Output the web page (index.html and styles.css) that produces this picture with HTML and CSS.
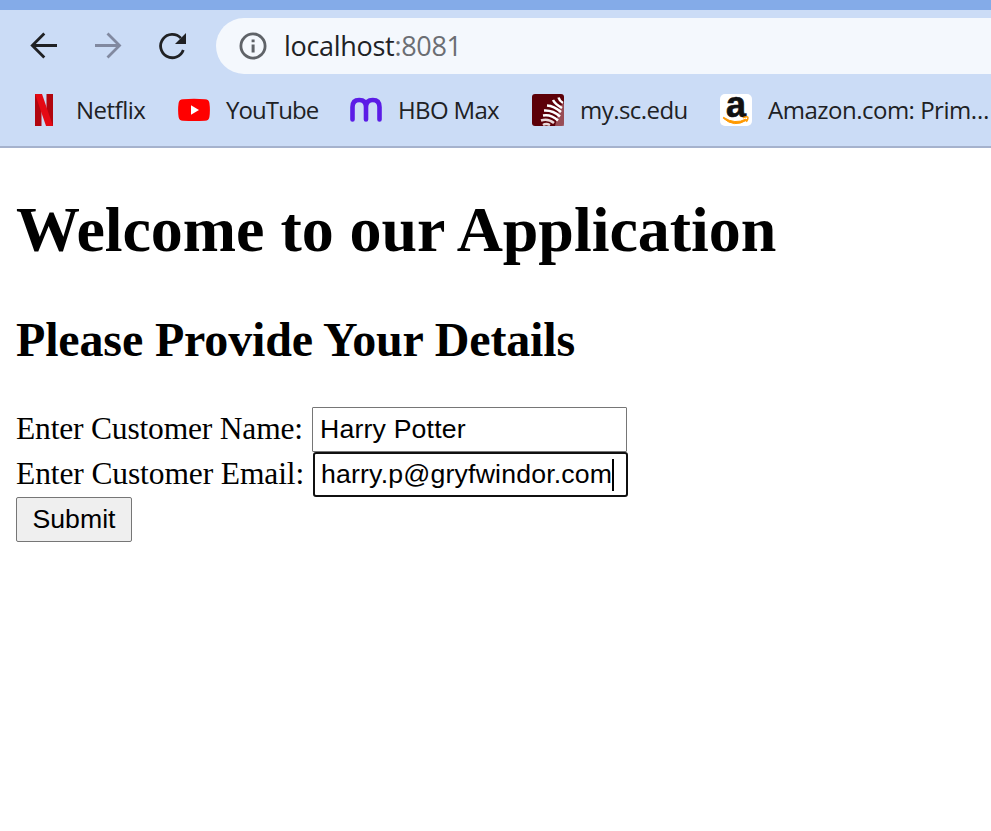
FILE: index.html
```html
<!DOCTYPE html>
<html lang="en">
<head>
<meta charset="utf-8">
<title>localhost:8081</title>
<link rel="stylesheet" href="styles.css">
</head>
<body>
<header class="browser">
  <div class="tabstrip"></div>
  <div class="toolbar">
    <nav class="nav">
      <svg width="32" height="32" viewBox="0 0 32 32" fill="none" stroke="#202124" stroke-width="2.8"><path d="M29 15.5H4.5M16.3 3.5L4.3 15.5L16.3 27.5"/></svg>
      <svg width="32" height="32" viewBox="0 0 32 32" fill="none" stroke="#8189a0" stroke-width="2.8"><path d="M3 15.5H27.5M15.5 3.5L27.5 15.5L15.5 27.5"/></svg>
      <svg width="32" height="32" viewBox="0 0 32 32"><path d="M27.3 20A11.7 11.7 0 1 1 24.9 8.1" fill="none" stroke="#202124" stroke-width="2.8"/><path d="M30 3V14H19Z" fill="#202124"/></svg>
    </nav>
    <div class="omnibox">
      <svg width="28" height="28" viewBox="0 0 28 28"><circle cx="14" cy="14" r="12.1" fill="none" stroke="#5f6368" stroke-width="2.8"/><path d="M12.6 7.4h3v2.8h-3zM12.6 12.6h3v8h-3z" fill="#5f6368"/></svg>
      <span class="url"><span class="host">localhost</span><span class="port">:8081</span></span>
    </div>
  </div>
  <div class="bookmarks">
    <div class="bookmark">
      <svg width="32" height="32" viewBox="0 0 32 32"><path d="M7 0h6.500v32H7zM18.500 0H25v32h-6.500z" fill="#b1060f"/><path d="M7 0h7l11 32h-7z" fill="#e50914"/></svg>
      <span class="name netflix">Netflix</span>
    </div>
    <div class="bookmark">
      <svg width="32" height="32" viewBox="0 0 32 32"><path d="M5 5.200Q16 4.500 27 5.200Q31 5.500 31.400 9Q32.400 16 31.400 23Q31 26.500 27 26.700Q16 27.500 5 26.700Q1 26.500.6 23Q-.4 16 .6 9Q1 5.500 5 5.200Z" fill="#f00"/><path d="M13 11.300L21 16L13 20.800Z" fill="#fff"/></svg>
      <span class="name youtube">YouTube</span>
    </div>
    <div class="bookmark">
      <svg width="32" height="32" viewBox="0 0 32 32"><path d="M2.500 25.500V13Q2.500 6 9.200 6Q16 6 16 13V25.500M16 13Q16 6 22.800 6Q29.500 6 29.500 13V25.500" fill="none" stroke="#5b1ce6" stroke-width="4.600" stroke-linecap="round"/></svg>
      <span class="name hbo">HBO Max</span>
    </div>
    <div class="bookmark">
      <svg width="32" height="32" viewBox="0 0 32 32"><rect width="32" height="32" rx="3" fill="#5c0008"/><path d="M28 12l4-3v23h-9z" fill="#a8606a" opacity=".8"/><g fill="none" stroke="#fff" stroke-width="2.500"><path d="M26.500 3.500Q27.500 7 31 9M21 6Q23 10 30 14M15 11.500Q22 12 29 18M12 16.500Q21 16 28 22.500M11 21.500Q19 20 26 26.500"/><path d="M9 26.500Q16 24 22 29M11 31Q14 29 18 31" stroke="#ead9da"/></g></svg>
      <span class="name edu">my.sc.edu</span>
    </div>
    <div class="bookmark">
      <span class="amazon-icon">
        <span class="amazon-a">a</span>
        <svg width="32" height="32" viewBox="0 0 32 32"><path d="M3.500 23.300Q15 31 26 25L26.700 26.200Q14 34 3.300 24.200Z" fill="#f90" stroke="#f90"/><path d="M23 23.700Q28 22 28 23.700Q28 25.500 26.300 27.700" fill="none" stroke="#f90" stroke-width="1.500"/></svg>
      </span>
      <span class="name amazon">Amazon.com: Prim…</span>
    </div>
  </div>
</header>
<main class="page">
  <h1>Welcome to our Application</h1>
  <h2>Please Provide Your Details</h2>
  <form>
    <div class="row">
      <label class="label-name" for="name">Enter Customer Name:</label>
      <input id="name" class="field" type="text" value="Harry Potter">
    </div>
    <div class="row">
      <label class="label-email">Enter Customer Email:</label>
      <div class="field focused"><span>harry.p@gryfwindor.com</span><i class="caret"></i></div>
    </div>
    <button type="button">Submit</button>
  </form>
</main>
</body>
</html>
```
FILE: styles.css
```css
* { box-sizing: border-box; }
body {
  margin: 0;
  height: 831px;
  overflow: hidden;
  background: #fff;
  color: #000;
  font-family: "Liberation Serif", serif;
}
svg { display: block; flex: none; }
.browser {
  height: 148px;
  background: #cbdcf6;
  border-bottom: 2px solid #a5b2cd;
  color: #202124;
  font-family: "Open Sans", sans-serif;
}
.tabstrip { height: 10px; background: #84abe8; }
.toolbar { display: flex; height: 72px; padding-top: 8px; }
.nav {
  display: flex;
  gap: 32px;
  width: 216px;
  height: 56px;
  padding: 12px 0 0 28px;
}
.omnibox {
  display: flex;
  align-items: center;
  flex: 1;
  height: 56px;
  padding-left: 22.5px;
  border-radius: 28px 0 0 28px;
  background: #f4f8fd;
}
.url { margin-left: 17.5px; font-size: 27px; line-height: 56px; white-space: nowrap; letter-spacing: -0.3px; }
.port { color: #6b6e73; }
.bookmarks {
  display: grid;
  grid-template-columns: 150px 172px 182px 188px 1fr;
  height: 56px;
  padding-left: 28px;
}
.bookmark { display: flex; align-items: center; gap: 16px; min-width: 0; }
.name { font-size: 24px; line-height: 32px; white-space: nowrap; }
.netflix { letter-spacing: -0.5px; }
.youtube { letter-spacing: -0.9px; }
.hbo { letter-spacing: -0.65px; }
.edu { letter-spacing: -0.55px; }
.amazon { letter-spacing: -0.5px; }
.amazon-icon {
  position: relative;
  flex: none;
  width: 32px;
  height: 32px;
  border-radius: 5px;
  background: #fff;
}
.amazon-icon svg { position: absolute; inset: 0; }
.amazon-a {
  position: absolute;
  left: 6px;
  top: -5px;
  color: #111;
  font: bold 36px/32px "Liberation Sans", sans-serif;
  -webkit-text-stroke: 0.7px #111;
}
.page { padding: 45px 16px 0; }
h1, h2 { margin: 0; font-weight: bold; white-space: nowrap; }
h1 { height: 74px; font-size: 64px; line-height: 74px; letter-spacing: -0.05px; }
h2 { height: 56px; margin: 44px 0 40px; font-size: 48px; line-height: 58px; letter-spacing: -0.15px; }
.row { display: flex; height: 45px; }
label {
  flex: none;
  width: 296px;
  font-size: 31.5px;
  line-height: 44px;
  white-space: nowrap;
}
.label-name { letter-spacing: -0.18px; }
.label-email { width: 297px; letter-spacing: -0.11px; }
.field {
  width: 315px;
  height: 45px;
  margin: 0;
  padding: 0 7px;
  border: 1px solid #767676;
  border-radius: 1px;
  outline: 0;
  background: #fff;
  color: #000;
  font: 26.67px/43px "Liberation Sans", sans-serif;
  letter-spacing: 0.18px;
}
.focused {
  display: flex;
  align-items: center;
  padding: 0 6px;
  border: 2px solid #101010;
  border-radius: 3px;
  white-space: nowrap;
}
.caret { width: 2px; height: 32px; background: #000; flex: none; }
button {
  display: block;
  width: 116px;
  height: 45px;
  padding: 0;
  border: 1px solid #767676;
  border-radius: 2px;
  background: #efefef;
  color: #000;
  font: 26.67px/43px "Liberation Sans", sans-serif;
}
```
